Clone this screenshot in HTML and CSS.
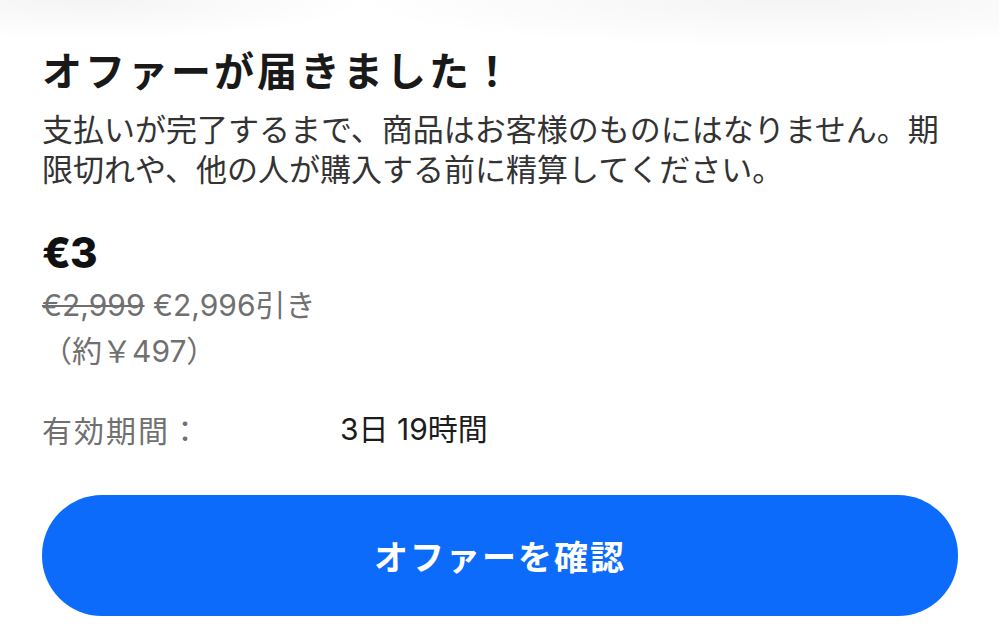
FILE: index.html
```html
<!DOCTYPE html>
<html lang="ja">
<head>
<meta charset="utf-8">
<title>オファー</title>
<link rel="stylesheet" href="styles.css">
</head>
<body>
<div class="sheet">
  <h1 class="title">オファーが届きました！</h1>
  <p class="lead">支払いが完了するまで、商品はお客様のものにはなりません。期限切れや、他の人が購入する前に精算してください。</p>
  <div class="price">€3</div>
  <div class="discount"><s class="was">€2,999</s> €2,996引き</div>
  <div class="approx">（約￥497）</div>
  <div class="expiry">
    <span class="expiry-label">有効期間：</span>
    <span class="expiry-value">3日 19時間</span>
  </div>
  <button class="cta" type="button">オファーを確認</button>
</div>
</body>
</html>
```
FILE: styles.css
```css
html, body {
  margin: 0;
  padding: 0;
  background: #fff;
}

body {
  font-family: "Noto Sans CJK JP", "Noto Sans", sans-serif;
  color: #1c1c1c;
}

.sheet {
  min-height: 643px;
  box-sizing: border-box;
  padding: 37px 41px 0 42px;
  background:
    radial-gradient(ellipse 280px 40px at 90px 0, rgba(0,0,0,0.045), rgba(0,0,0,0) 100%),
    radial-gradient(ellipse 440px 48px at 790px 0, rgba(0,0,0,0.045), rgba(0,0,0,0) 100%),
    #fff;
}

.title {
  margin: 0;
  font-size: 40px;
  font-weight: 700;
  line-height: 64px;
  letter-spacing: 3px;
  color: #191919;
}

.lead {
  margin: 7px 0 0;
  font-size: 31px;
  line-height: 40px;
  color: #333;
}

.price {
  margin-top: 40px;
  font-family: "Inter", "Noto Sans CJK JP", sans-serif;
  font-size: 42px;
  font-weight: 800;
  line-height: 50px;
  letter-spacing: -1px;
  color: #111;
}

.discount,
.approx {
  font-family: "Inter", "Noto Sans CJK JP", sans-serif;
  font-size: 30px;
  line-height: 46px;
  color: #707070;
}

.discount {
  margin-top: 4px;
}

.was {
  text-decoration: line-through;
  text-decoration-thickness: 2px;
}

.expiry {
  display: flex;
  margin-top: 33px;
  font-size: 30px;
  line-height: 44px;
}

.expiry-label {
  width: 298px;
  color: #707070;
  letter-spacing: 2px;
}

.expiry-value {
  font-family: "Inter", "Noto Sans CJK JP", sans-serif;
  color: #1c1c1c;
}

.cta {
  display: block;
  width: 100%;
  height: 121px;
  margin-top: 44px;
  border: 0;
  border-radius: 60px;
  background: #0d6bfc;
  color: #fff;
  font-family: "Noto Sans CJK JP", sans-serif;
  font-size: 34px;
  font-weight: 700;
  letter-spacing: 2px;
}
```
